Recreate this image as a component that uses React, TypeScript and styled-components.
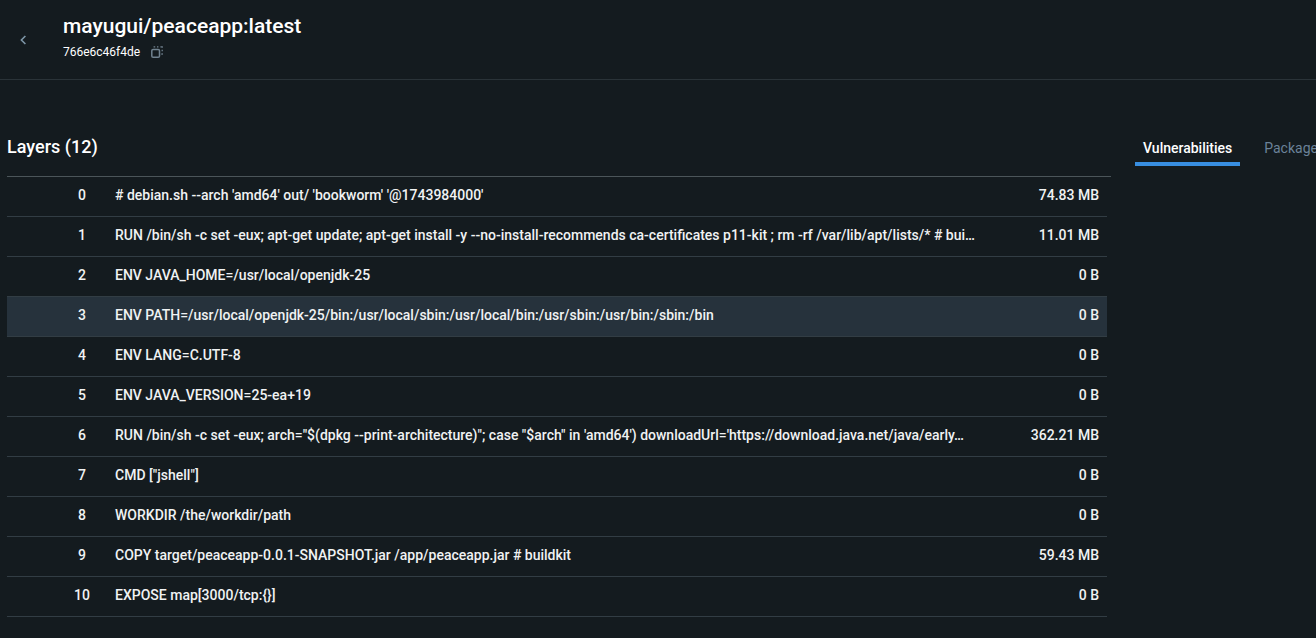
import React from 'react';
import styled, { createGlobalStyle } from 'styled-components';

const GlobalStyle = createGlobalStyle`
  *, *::before, *::after { box-sizing: border-box; }
  body {
    margin: 0;
    background: #141b1f;
    color: #fff;
    font-family: Roboto, 'Liberation Sans', sans-serif;
    font-size: 14px;
    line-height: 20px;
  }
`;

const Page = styled.div`
  min-height: 100vh;
  overflow: hidden;
`;

const Header = styled.header`
  display: flex;
  align-items: center;
  gap: 24px;
  height: 80px;
  padding-left: 7px;
  border-bottom: 1px solid #2a3338;
`;

const IconButton = styled.button<{ $size: number }>`
  display: flex;
  align-items: center;
  justify-content: center;
  width: ${(p) => p.$size}px;
  height: ${(p) => p.$size}px;
  padding: 0;
  border: 0;
  background: none;
  color: ${(p) => (p.$size > 20 ? '#7e97a8' : '#71828f')};
  cursor: pointer;
`;

const TitleBlock = styled.div`
  padding-bottom: 3px;
`;

const Title = styled.h1`
  margin: 0;
  font-size: 21px;
  line-height: 28px;
  font-weight: 500;
`;

const Digest = styled.div`
  display: flex;
  align-items: center;
  gap: 9px;
  font-size: 12px;
  line-height: 25px;
`;

const Content = styled.main`
  display: flex;
  gap: 24px;
  padding: 56px 0 20px 7px;
`;

const LayersPanel = styled.section`
  flex: 1;
  min-width: 0;
`;

const Heading = styled.h2`
  margin: 0;
  padding: 0 0 18px;
  font-size: 18px;
  line-height: 22px;
  font-weight: 500;
`;

const LayerList = styled.div`
  padding-right: 4px;
  border-top: 1px solid #4b5559;
`;

const LayerTable = styled.table`
  width: 100%;
  table-layout: fixed;
  border-spacing: 0;
`;

const Row = styled.tr<{ $active: boolean }>`
  height: 40px;
  background: ${(p) => (p.$active ? '#26323c' : 'transparent')};
  color: #f0f2f3;
  font-weight: 500;
`;

const Cell = styled.td`
  padding: 0 8px 4px;
  border-bottom: 1px solid #323d44;
`;

const IndexCell = styled(Cell)`
  width: 100px;
  padding-left: 58px;
  text-align: center;
`;

const CommandCell = styled(Cell)`
  padding-right: 0;
  overflow: hidden;
  text-overflow: ellipsis;
  white-space: nowrap;
`;

const SizeCell = styled(Cell)`
  width: 107px;
  text-align: right;
  white-space: nowrap;
`;

const Details = styled.section`
  flex: 0 0 181px;
  min-width: 0;
`;

const Tabs = styled.div`
  display: flex;
  gap: 16px;
`;

const Tab = styled.button<{ $active?: boolean }>`
  flex: none;
  height: 30px;
  padding: 0 8px 2px;
  border: 0;
  border-bottom: 4px solid ${(p) => (p.$active ? '#388ee0' : 'transparent')};
  background: none;
  color: ${(p) => (p.$active ? '#fff' : '#6b8299')};
  font: ${(p) => (p.$active ? 500 : 400)} 14px/20px Roboto, sans-serif;
  white-space: nowrap;
  cursor: pointer;
`;

const layers: [string, string][] = [
  ["# debian.sh --arch 'amd64' out/ 'bookworm' '@1743984000'", '74.83 MB'],
  ['RUN /bin/sh -c set -eux; apt-get update; apt-get install -y --no-install-recommends ca-certificates p11-kit ; rm -rf /var/lib/apt/lists/* # bui…', '11.01 MB'],
  ['ENV JAVA_HOME=/usr/local/openjdk-25', '0 B'],
  ['ENV PATH=/usr/local/openjdk-25/bin:/usr/local/sbin:/usr/local/bin:/usr/sbin:/usr/bin:/sbin:/bin', '0 B'],
  ['ENV LANG=C.UTF-8', '0 B'],
  ['ENV JAVA_VERSION=25-ea+19', '0 B'],
  [`RUN /bin/sh -c set -eux; arch="$(dpkg --print-architecture)"; case "$arch" in 'amd64') downloadUrl='https://download.java.net/java/early…`, '362.21 MB'],
  ['CMD ["jshell"]', '0 B'],
  ['WORKDIR /the/workdir/path', '0 B'],
  ['COPY target/peaceapp-0.0.1-SNAPSHOT.jar /app/peaceapp.jar # buildkit', '59.43 MB'],
  ['EXPOSE map[3000/tcp:{}]', '0 B'],
];

const BackIcon = () => (
  <svg width="8" height="10" viewBox="0 0 8 10" fill="none" stroke="currentColor" strokeWidth="1.6" aria-hidden="true">
    <path d="M6.4 1 2.4 5l4 4" />
  </svg>
);

const CopyIcon = () => (
  <svg width="12" height="12" viewBox="0 0 12 12" fill="none" stroke="currentColor" strokeWidth="1.5" aria-hidden="true">
    <rect x="0.8" y="3.5" width="7.7" height="7.7" rx="1.3" />
    <path d="M3.2 1.6V.8h1M6 .8h1.4M9.4.8h1.8v1M11.2 3.8v1.5M11.2 7.2v1h-.9" strokeWidth="1.3" />
  </svg>
);

export default function App() {
  return (
    <Page>
      <GlobalStyle />
      <Header>
        <IconButton type="button" $size={32} aria-label="Back">
          <BackIcon />
        </IconButton>
        <TitleBlock>
          <Title>mayugui/peaceapp:latest</Title>
          <Digest>
            766e6c46f4de
            <IconButton type="button" $size={16} aria-label="Copy digest">
              <CopyIcon />
            </IconButton>
          </Digest>
        </TitleBlock>
      </Header>
      <Content>
        <LayersPanel>
          <Heading>Layers (12)</Heading>
          <LayerList>
            <LayerTable>
              <tbody>
                {layers.map(([command, size], index) => (
                  <Row key={index} $active={index === 3}>
                    <IndexCell>{index}</IndexCell>
                    <CommandCell>{command}</CommandCell>
                    <SizeCell>{size}</SizeCell>
                  </Row>
                ))}
              </tbody>
            </LayerTable>
          </LayerList>
        </LayersPanel>
        <Details>
          <Tabs role="tablist">
            <Tab type="button" role="tab" aria-selected="true" $active>Vulnerabilities</Tab>
            <Tab type="button" role="tab" aria-selected="false">Packages</Tab>
          </Tabs>
        </Details>
      </Content>
    </Page>
  );
}
